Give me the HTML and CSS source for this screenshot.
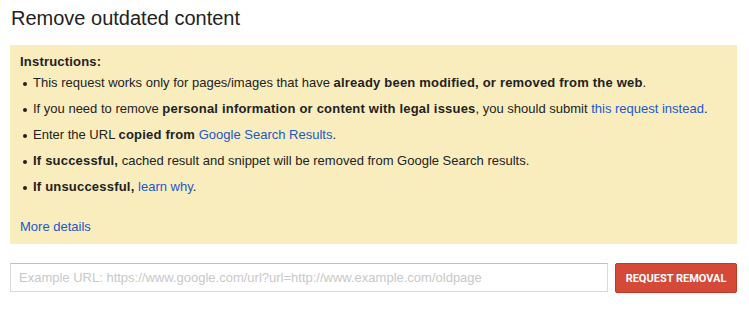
FILE: index.html
```html
<!DOCTYPE html>
<html>
<head>
<meta charset="utf-8">
<link rel="stylesheet" href="styles.css">
</head>
<body>
<div class="page">
  <h1 class="title">Remove outdated content</h1>
  <div class="notice">
    <div class="heading">Instructions:</div>
    <ul class="list">
      <li>This request works only for pages/images that have <b>already been modified, or removed from the web</b>.</li>
      <li>If you need to remove <b>personal information or content with legal issues</b>, you should submit <a href="#">this request instead</a>.</li>
      <li>Enter the URL <b>copied from</b> <a href="#">Google Search Results</a>.</li>
      <li><b>If successful,</b> cached result and snippet will be removed from Google Search results.</li>
      <li><b>If unsuccessful,</b> <a href="#">learn why</a>.</li>
    </ul>
    <a class="more" href="#">More details</a>
  </div>
  <div class="form">
    <input class="url" type="text" placeholder="Example URL: https://www.google.com/url?url=http://www.example.com/oldpage">
    <button class="btn">REQUEST REMOVAL</button>
  </div>
</div>
</body>
</html>
```
FILE: styles.css
```css
html, body {
  margin: 0;
  padding: 0;
  background: #fff;
}
body {
  font-family: Arial, "Liberation Sans", sans-serif;
  color: #222;
  font-size: 13px;
}
.page {
  width: 727px;
  padding: 6px 10px 0 10px;
}
.title {
  margin: 0 0 15px 1px;
  font-size: 20px;
  font-weight: normal;
  line-height: 24px;
  color: #222;
}
.notice {
  background: #f9edbe;
  padding: 9px 10px 9px 10px;
}
.notice b,
.heading {
  letter-spacing: 0.2px;
}
.heading {
  font-weight: bold;
  line-height: 16px;
}
.list {
  margin: 5px 0 0 0;
  padding: 0 0 0 13px;
  list-style: none;
}
.list li {
  position: relative;
  line-height: 16px;
  margin-bottom: 10px;
}
.list li::before {
  content: "";
  position: absolute;
  left: -10px;
  top: 7px;
  width: 4px;
  height: 4px;
  border-radius: 50%;
  background: #222;
}
.list li:last-child {
  margin-bottom: 24px;
}
a {
  color: #2257cc;
  text-decoration: none;
}
.more {
  display: block;
  line-height: 16px;
}
.form {
  display: flex;
  align-items: flex-start;
  gap: 7px;
  margin-top: 19px;
}
.url {
  box-sizing: border-box;
  flex: 0 0 598px;
  height: 29px;
  border: 1px solid #d9d9d9;
  border-top-color: #c0c0c0;
  padding: 0 8px;
  font-family: Arial, "Liberation Sans", sans-serif;
  font-size: 13px;
  color: #222;
  outline: none;
  margin: 0;
}
.url::placeholder {
  color: #c8c8c8;
}
.btn {
  box-sizing: border-box;
  flex: 0 0 122px;
  height: 30px;
  margin: 0;
  background: #d44937;
  border: 1px solid #c53727;
  border-radius: 2px;
  color: #fff;
  font-family: Roboto, Arial, sans-serif;
  font-weight: bold;
  font-size: 11px;
  padding: 0;
}
```
